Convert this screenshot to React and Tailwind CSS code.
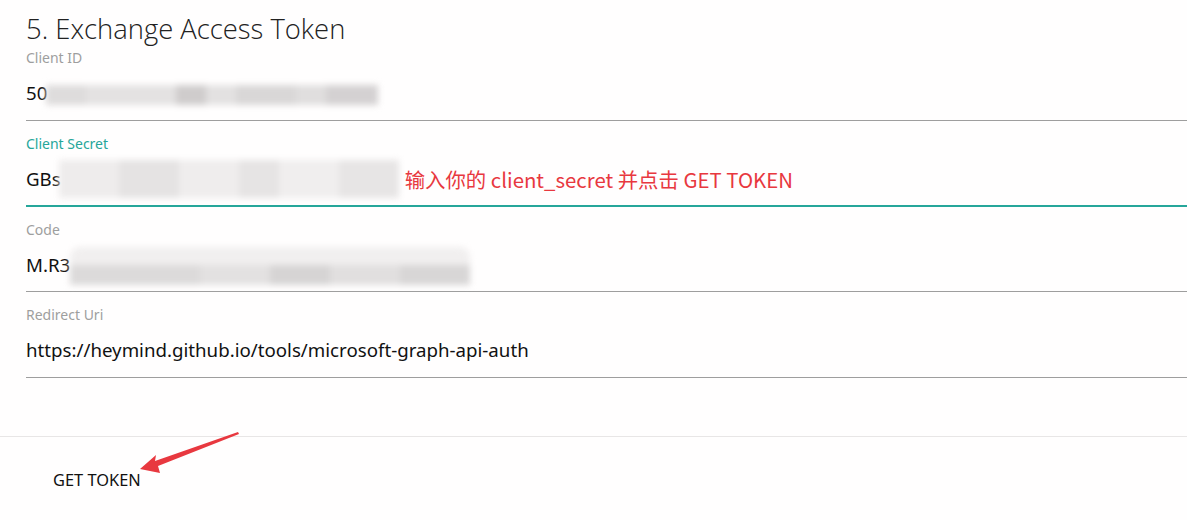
import React from "react";

const font = { fontFamily: '"Noto Sans", "Open Sans", sans-serif' };

function Blur({ blocks, className }) {
  return (
    <div className={"flex items-stretch blur-[3px] " + className}>
      {blocks.map((b, i) => (
        <div key={i} className="h-full" style={{ width: b[0], background: b[1] }} />
      ))}
    </div>
  );
}

function Field({ label, active, ih, children }) {
  return (
    <div className={"pt-[14px] " + (active ? "border-b-2 border-[#26a69a]" : "border-b border-[#9e9e9e]")}>
      <div className={"h-[18px] text-[14px] leading-[18px] " + (active ? "text-[#26a69a]" : "text-[#9e9e9e]")}>{label}</div>
      <div className={ih + " flex items-center text-[18.7px] text-[#111]"}>{children}</div>
    </div>
  );
}

export default function App() {
  return (
    <div className="w-[1187px] h-[520px] bg-[#fffefe] overflow-hidden relative" style={font}>
      <div className="pl-[26px]">
        <h1
          className="h-[35px] pt-[13px] text-[27.4px] leading-[32px] font-light text-[#222]"
          style={{ fontFamily: '"Open Sans", "Noto Sans", sans-serif' }}
        >
          5. Exchange Access Token
        </h1>
        <Field label="Client ID" ih="h-[53px]">
          <span>50</span>
          <Blur
            className="h-[20px] w-[332px] -ml-[1px] mt-[3px]"
            blocks={[[40, "#dedcdc"], [90, "#e4e2e2"], [30, "#cfcccc"], [30, "#e3e1e1"], [60, "#d9d7d7"], [30, "#e0dede"], [52, "#d4d1d2"]]}
          />
        </Field>
        <Field label="Client Secret" active ih="h-[52px]">
          <span>GBs</span>
          <Blur
            className="h-[38px] w-[340px] -ml-[2px] rounded-[8px]"
            blocks={[[60, "#eeecec"], [60, "#e5e3e3"], [60, "#efeded"], [40, "#e6e4e4"], [60, "#f0eeee"], [60, "#e7e5e5"]]}
          />
          <span className="ml-[6px] text-[20.4px] text-[#e8383f]" style={{ fontFamily: '"Noto Sans CJK SC", sans-serif' }}>
            输入你的 client_secret 并点击 GET TOKEN
          </span>
        </Field>
        <Field label="Code" ih="h-[52px]">
          <span>M.R3</span>
          <div className="flex flex-col w-[400px] h-[40px] blur-[3px] mt-[4px]">
            <div className="h-[18px] bg-[#f1efef] rounded-t-[10px]" />
            <div className="h-[20px] flex">
              <div className="w-[130px] bg-[#dcdada]" />
              <div className="w-[70px] bg-[#e3e1e1]" />
              <div className="w-[60px] bg-[#d6d4d4]" />
              <div className="w-[70px] bg-[#e1dfdf]" />
              <div className="w-[70px] bg-[#d8d6d6]" />
            </div>
          </div>
        </Field>
        <Field label="Redirect Uri" ih="h-[53px]">
          <span>https://heymind.github.io/tools/microsoft-graph-api-auth</span>
        </Field>
      </div>
      <div className="mt-[58px] border-t border-[#e8e6e6] pt-[31px] pl-[53px]">
        <button className="text-[16.4px] leading-[24px] text-[#111] uppercase">Get Token</button>
      </div>
      <svg className="absolute left-0 top-0 pointer-events-none" width="1187" height="520">
        <polygon
          points="140,469 156,455 155,461 238,432 239,434 158,466 160,473"
          fill="#e8383f"
        />
      </svg>
    </div>
  );
}
